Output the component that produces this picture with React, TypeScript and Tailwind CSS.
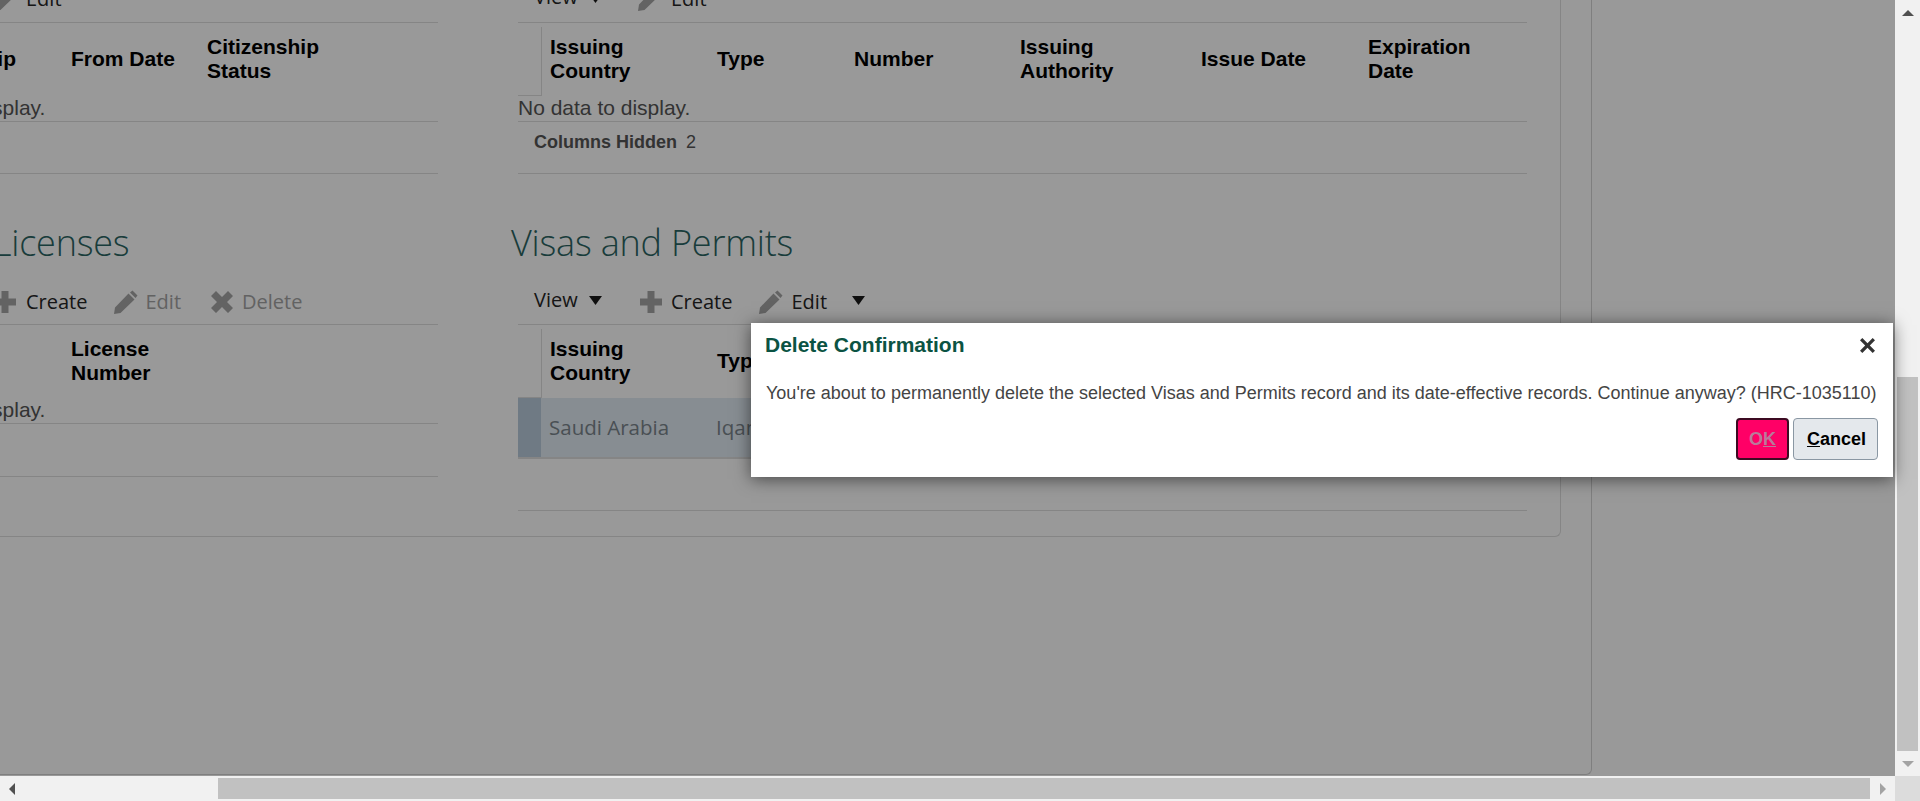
const sans = "font-['Liberation_Sans',Arial,sans-serif]";
const segoe = "font-['Open_Sans',sans-serif]";

const PlusIcon = ({ className }: { className: string }) => (
  <svg viewBox="0 0 22 22" className={className} fill="currentColor">
    <path d="M7.500 0h7v7.500H22v7h-7.500V22h-7v-7.500H0v-7h7.500z" />
  </svg>
);

const PencilIcon = ({ className }: { className: string }) => (
  <svg viewBox="0 0 24 24" className={className} fill="currentColor">
    <path d="M18.500 .5l5 5-2 2.500-5.500-5.500zM14.500 3.500l6 6L6.500 23 0 24l1-6.500z" />
  </svg>
);

const DeleteIcon = ({ className }: { className: string }) => (
  <svg viewBox="0 0 22 22" className={className} fill="currentColor">
    <path d="M5 0l6 6 6-6 5 5-6 6 6 6-5 5-6-6-6 6-5-5 6-6-6-6z" />
  </svg>
);

const Caret = () => (
  <svg viewBox="0 0 13 9" className="w-[13px] h-[9px] text-[#1a1a1a] -mt-[2px]" fill="currentColor">
    <path d="M0 0h13L6.500 9z" />
  </svg>
);

const ToolButton = ({
  icon: Icon,
  iconClass,
  label,
  disabled,
}: {
  icon: ({ className }: { className: string }) => React.ReactElement;
  iconClass: string;
  label: string;
  disabled?: boolean;
}) => (
  <div className="flex items-center">
    <Icon className={`${iconClass} text-[#a6a6a6]`} />
    <span className={`${segoe} text-[20px] leading-[26px] ${disabled ? "text-[#a4a4a4]" : "text-[#262626]"}`}>
      {label}
    </span>
  </div>
);

const ViewMenu = () => (
  <div className="flex items-center">
    <span className={`${segoe} w-[46px] text-[20px] leading-[26px] text-[#262626] -mt-[4px] mr-[9px]`}>View</span>
    <Caret />
  </div>
);

const HeaderCell = ({ lines, width }: { lines: string[]; width: string }) => (
  <div className={`${width} shrink-0 text-[21px] leading-[24px] font-bold text-black`}>
    {lines.map((line) => (
      <div key={line}>{line}</div>
    ))}
  </div>
);

const Title = ({ text, className }: { text: string; className: string }) => (
  <div className={`h-[105px] pt-[33px] flex items-center ${className}`}>
    <h2 className={`${segoe} font-light text-[36px] leading-[44px] tracking-[-0.2px] text-[#2b6563] whitespace-nowrap`}>
      {text}
    </h2>
  </div>
);

const NoData = ({ className }: { className: string }) => (
  <div className={`h-[26px] leading-[24px] text-[21px] text-[#555] whitespace-nowrap ${className}`}>
    No data to display.
  </div>
);

const VisaHeader = () => (
  <div className="flex items-center h-[73px]">
    <div className="w-[24px] h-[69px] mt-[4px] border-r border-b border-[#dedede] shrink-0" />
    <div className="flex items-center pl-[8px] pb-[2px]">
      <HeaderCell lines={["Issuing", "Country"]} width="w-[167px]" />
      <HeaderCell lines={["Type"]} width="w-[137px]" />
      <HeaderCell lines={["Number"]} width="w-[166px]" />
      <HeaderCell lines={["Issuing", "Authority"]} width="w-[181px]" />
      <HeaderCell lines={["Issue Date"]} width="w-[167px]" />
      <HeaderCell lines={["Expiration", "Date"]} width="w-[160px]" />
    </div>
  </div>
);

const App = () => {
  return (
    <div className={`${sans} relative w-[1920px] h-[801px] overflow-hidden flex flex-col bg-white`}>
      <div className="flex flex-1 min-h-0">
        {/* Page, scrolled right and down */}
        <div className="flex-1 min-w-0 overflow-hidden">
          <div className="flow-root w-[1592px] h-[775px] border-r border-b border-[#d4d4d4] rounded-br-[6px]">
            <div className="w-[1561px] h-[561px] -mt-[24px] flex gap-[80px] border-r border-b border-[#dedede] rounded-br-[6px]">
              {/* Left column */}
              <div className="w-[438px] shrink-0">
                <div className="h-[47px] flex items-center border-b border-[#dedede] -ml-[6px]">
                  <ToolButton icon={PencilIcon} iconClass="w-[24px] h-[24px] mr-[8px]" label="Edit" />
                </div>
                <div className="flex items-center h-[73px] -ml-[96px] pb-[2px]">
                  <HeaderCell lines={["Citizenship"]} width="w-[167px]" />
                  <HeaderCell lines={["From Date"]} width="w-[136px]" />
                  <HeaderCell lines={["Citizenship", "Status"]} width="w-[160px]" />
                </div>
                <NoData className="-ml-[127px] border-b border-[#dedede]" />
                <div className="h-[52px] border-b border-[#dedede]" />
                <Title text="Licenses" className="-ml-[7px]" />
                <div className="h-[46px] flex items-center border-b border-[#dedede] -ml-[6px]">
                  <ToolButton icon={PlusIcon} iconClass="w-[22px] h-[22px] mr-[10px]" label="Create" />
                  <div className="ml-[27px]">
                    <ToolButton icon={PencilIcon} iconClass="w-[24px] h-[24px] mr-[7px]" label="Edit" disabled />
                  </div>
                  <div className="ml-[30px]">
                    <ToolButton icon={DeleteIcon} iconClass="w-[22px] h-[22px] mr-[9px]" label="Delete" disabled />
                  </div>
                </div>
                <div className="flex items-center h-[73px] pl-[71px] pb-[2px]">
                  <HeaderCell lines={["License", "Number"]} width="w-[160px]" />
                </div>
                <NoData className="-ml-[127px] border-b border-[#dedede]" />
                <div className="h-[53px] border-b border-[#dedede]" />
              </div>

              {/* Right column */}
              <div className="w-[1009px] shrink-0">
                <div className="h-[47px] flex items-center border-b border-[#dedede] pl-[16px]">
                  <ViewMenu />
                  <div className="ml-[36px]">
                    <ToolButton icon={PencilIcon} iconClass="w-[24px] h-[24px] mr-[9px]" label="Edit" />
                  </div>
                </div>
                <VisaHeader />
                <NoData className="border-b border-[#dedede]" />
                <div className="h-[52px] flex items-center pl-[16px] pb-[10px] text-[18px] border-b border-[#dedede] text-[#555]">
                  <span className="font-bold mr-[9px]">Columns Hidden</span>
                  <span>2</span>
                </div>
                <Title text="Visas and Permits" className="-ml-[7px]" />
                <div className="h-[46px] flex items-center border-b border-[#dedede] pl-[16px]">
                  <ViewMenu />
                  <div className="ml-[38px]">
                    <ToolButton icon={PlusIcon} iconClass="w-[22px] h-[22px] mr-[9px]" label="Create" />
                  </div>
                  <div className="ml-[27px]">
                    <ToolButton icon={PencilIcon} iconClass="w-[24px] h-[24px] mr-[8px]" label="Edit" />
                  </div>
                  <div className="ml-[25px]">
                    <Caret />
                  </div>
                </div>
                <VisaHeader />
                <div className="flex h-[61px] border-b-2 border-[#dedede]">
                  <div className="w-[23px] bg-[#b9ccdc] shrink-0" />
                  <div className={`${segoe} flex-1 flex items-center pl-[8px] bg-[#e1ebf3] text-[20.500px] text-[#7b858d]`}>
                    <span className="w-[167px]">Saudi Arabia</span>
                    <span>Iqama</span>
                  </div>
                </div>
                <div className="h-[52px] border-b border-[#dedede]" />
              </div>
            </div>
          </div>
        </div>

        {/* Vertical scrollbar */}
        <div className="w-[25px] shrink-0 flex flex-col bg-[#f1f1f1] px-[2px]">
          <div className="h-[377px] flex justify-center pt-[10px]">
            <svg viewBox="0 0 12 6" className="w-[12px] h-[6px] text-[#505050]" fill="currentColor">
              <path d="M0 6h12L6 0z" />
            </svg>
          </div>
          <div className="h-[374px] bg-[#c1c1c1]" />
          <div className="flex-1 flex items-center justify-center">
            <svg viewBox="0 0 12 6" className="w-[12px] h-[6px] text-[#a3a3a3]" fill="currentColor">
              <path d="M0 0h12L6 6z" />
            </svg>
          </div>
        </div>
      </div>

      {/* Horizontal scrollbar */}
      <div className="h-[25px] shrink-0 flex bg-[#f1f1f1]">
        <div className="w-[218px] py-[2px] flex items-center pl-[9px]">
          <svg viewBox="0 0 6 12" className="w-[6px] h-[12px] text-[#505050]" fill="currentColor">
            <path d="M6 0v12L0 6z" />
          </svg>
        </div>
        <div className="my-[2px] w-[1652px] bg-[#c1c1c1]" />
        <div className="w-[25px] flex items-center justify-center">
          <svg viewBox="0 0 6 12" className="w-[6px] h-[12px] text-[#a3a3a3]" fill="currentColor">
            <path d="M0 0v12l6-6z" />
          </svg>
        </div>
        <div className="w-[25px] bg-[#dcdcdc]" />
      </div>

      {/* Modal overlay */}
      <div className="absolute left-0 top-0 w-[1895px] h-[776px] bg-black/40" />

      {/* Delete confirmation dialog */}
      <div className="absolute left-[751px] top-[323px] w-[1142px] h-[154px] bg-white shadow-[0_2px_16px_rgba(0,0,0,0.55)] pl-[14px] pr-[15px] pt-[11px] flex flex-col">
        <div className="flex items-center justify-between h-[22px]">
          <span className="text-[21px] font-bold text-[#0b5343]">Delete Confirmation</span>
          <svg viewBox="0 0 16 16" className="w-[15px] h-[15px] mr-[3px] text-[#333]" fill="currentColor">
            <path d="M2.500 0L8 5.500 13.500 0 16 2.500 10.500 8l5.500 5.500-2.500 2.500L8 10.500 2.500 16 0 13.500 5.500 8 0 2.500z" />
          </svg>
        </div>
        <div className="mt-[25px] pl-[1px] text-[18px] leading-[24px] text-[#444] whitespace-nowrap">
          You're about to permanently delete the selected Visas and Permits record and its date-effective records. Continue anyway? (HRC-1035110)
        </div>
        <div className="mt-[13px] flex justify-end gap-[4px]">
          <button className="w-[53px] h-[42px] rounded-[4px] bg-[#ff0066] border-2 border-[#3c0a22] text-[18px] font-bold text-[#b87a9a]">
            O<span className="underline">K</span>
          </button>
          <button className="w-[85px] h-[42px] pl-[2px] rounded-[4px] bg-[#e4e8ec] border border-[#8a97a3] text-[18px] font-bold text-black">
            <span className="underline">C</span>ancel
          </button>
        </div>
      </div>
    </div>
  );
};

export default App;
